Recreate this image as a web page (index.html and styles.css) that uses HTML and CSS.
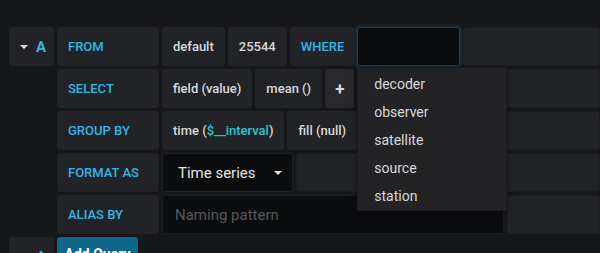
FILE: index.html
```html
<!DOCTYPE html>
<html lang="en">
<head>
  <meta charset="UTF-8" />
  <title>Query editor</title>
  <link rel="stylesheet" href="styles.css">
</head>
<body>
  <div class="query">
    <div class="query-header">
      <span class="caret"></span>
      <span class="ref-id">A</span>
    </div>
    <div class="query-rows">
      <div class="form-row">
        <div class="label">FROM</div>
        <div class="segment">default</div>
        <div class="segment">25544</div>
        <div class="label label--auto">WHERE</div>
        <div class="input-wrap">
          <div class="input input--focus"></div>
          <ul class="typeahead">
            <li>decoder</li>
            <li>observer</li>
            <li>satellite</li>
            <li>source</li>
            <li>station</li>
          </ul>
        </div>
        <div class="filler"></div>
      </div>

      <div class="form-row">
        <div class="label">SELECT</div>
        <div class="segment">field (value)</div>
        <div class="segment">mean ()</div>
        <div class="segment segment--plus">+</div>
        <div class="filler"></div>
      </div>

      <div class="form-row">
        <div class="label">GROUP BY</div>
        <div class="segment">time (<span class="variable">$__interval</span>)</div>
        <div class="segment">fill (null)</div>
        <div class="filler"></div>
      </div>

      <div class="form-row">
        <div class="label">FORMAT AS</div>
        <div class="select">Time series <span class="select-caret"></span></div>
        <div class="filler"></div>
      </div>

      <div class="form-row">
        <div class="label">ALIAS BY</div>
        <div class="input input--alias"><span class="placeholder">Naming pattern</span></div>
        <div class="filler"></div>
      </div>
    </div>
  </div>

  <div class="query query--add">
    <div class="query-header">
      <span class="caret"></span>
      <span class="ref-id">A</span>
    </div>
    <div class="query-rows">
      <div class="form-row">
        <button class="add-btn">Add Query</button>
      </div>
    </div>
  </div>
</body>
</html>
```

FILE: styles.css
```css
:root {
  --bg: #161719;
  --box: #222327;
  --box-light: #29292c;
  --input: #0b0c0e;
  --fg: #d8d9da;
  --blue: #33b5e5;
  --variable: #2cc3d6;
}

* {
  box-sizing: border-box;
  margin: 0;
  padding: 0;
}

body {
  background: var(--bg);
  color: var(--fg);
  font-family: Roboto, "Helvetica Neue", Arial, sans-serif;
  font-size: 13px;
  font-weight: 500;
  padding: 27px 0 0 9px;
  height: 253px;
  overflow: hidden;
}

.query {
  display: flex;
  gap: 3px;
}
.query--add { margin-top: 3px; }

.query-header {
  width: 45px;
  height: 39px;
  flex: none;
  background: var(--box);
  border-radius: 3px;
  display: flex;
  align-items: center;
  padding-left: 11px;
}

.caret {
  width: 0;
  height: 0;
  border-left: 4px solid transparent;
  border-right: 4px solid transparent;
  border-top: 4px solid #e0e0e0;
  margin-right: 8px;
}

.ref-id {
  color: var(--blue);
  font-size: 15px;
  font-weight: 700;
}

.query-rows {
  flex: 1;
  display: flex;
  flex-direction: column;
  gap: 3px;
}

.form-row {
  display: flex;
  gap: 3px;
  height: 39px;
}

.label,
.segment {
  display: flex;
  align-items: center;
  background: var(--box);
  border-radius: 3px;
  padding: 0 11px;
  white-space: nowrap;
}

.label {
  width: 102px;
  color: var(--blue);
  flex: none;
}
.label--auto { width: auto; padding-right: 10px; }

.segment--plus {
  background: var(--box-light);
  font-size: 17px;
  font-weight: 700;
  padding: 0 10px;
}

.variable { color: var(--variable); }

.filler {
  flex: 1;
  background: var(--box);
  border: 1px solid #1c1d20;
  border-radius: 3px;
}

.input-wrap {
  position: relative;
  width: 103px;
  flex: none;
}

.input {
  height: 100%;
  background: var(--input);
  border: 1px solid #1d1e21;
  border-radius: 3px;
}
.input--focus {
  border-color: #2b3b48;
  box-shadow: 0 0 4px 1px rgba(51, 160, 229, 0.25);
}
.input--alias {
  width: 342px;
  flex: none;
  display: flex;
  align-items: center;
  padding-left: 12px;
  font-size: 15px;
  font-weight: 400;
}
.placeholder { color: #55575c; }

.select {
  width: 131px;
  flex: none;
  display: flex;
  align-items: center;
  justify-content: space-between;
  background: var(--input);
  border: 1px solid #202124;
  border-radius: 3px;
  padding: 0 10px 0 15px;
  font-size: 15px;
  font-weight: 400;
  color: #e4e5e6;
}
.select-caret {
  border-left: 4px solid transparent;
  border-right: 4px solid transparent;
  border-top: 4px solid #e0e0e0;
}

.typeahead {
  position: absolute;
  top: 100%;
  left: 0;
  margin-top: 1px;
  width: 150px;
  list-style: none;
  background: #232326;
  border: 1px solid #1c1c1f;
  box-shadow: 0 2px 6px rgba(0, 0, 0, 0.4);
  padding: 2px 0 0;
  z-index: 10;
}
.typeahead li {
  height: 28px;
  line-height: 28px;
  padding-left: 16px;
  font-size: 14px;
  font-weight: 400;
  color: #d8d9da;
}

.add-btn {
  width: 81px;
  height: 39px;
  padding-bottom: 6px;
  background: #0e6688;
  border: none;
  border-radius: 3px;
  color: #fff;
  font-family: inherit;
  font-size: 14px;
  font-weight: 700;
}
```
